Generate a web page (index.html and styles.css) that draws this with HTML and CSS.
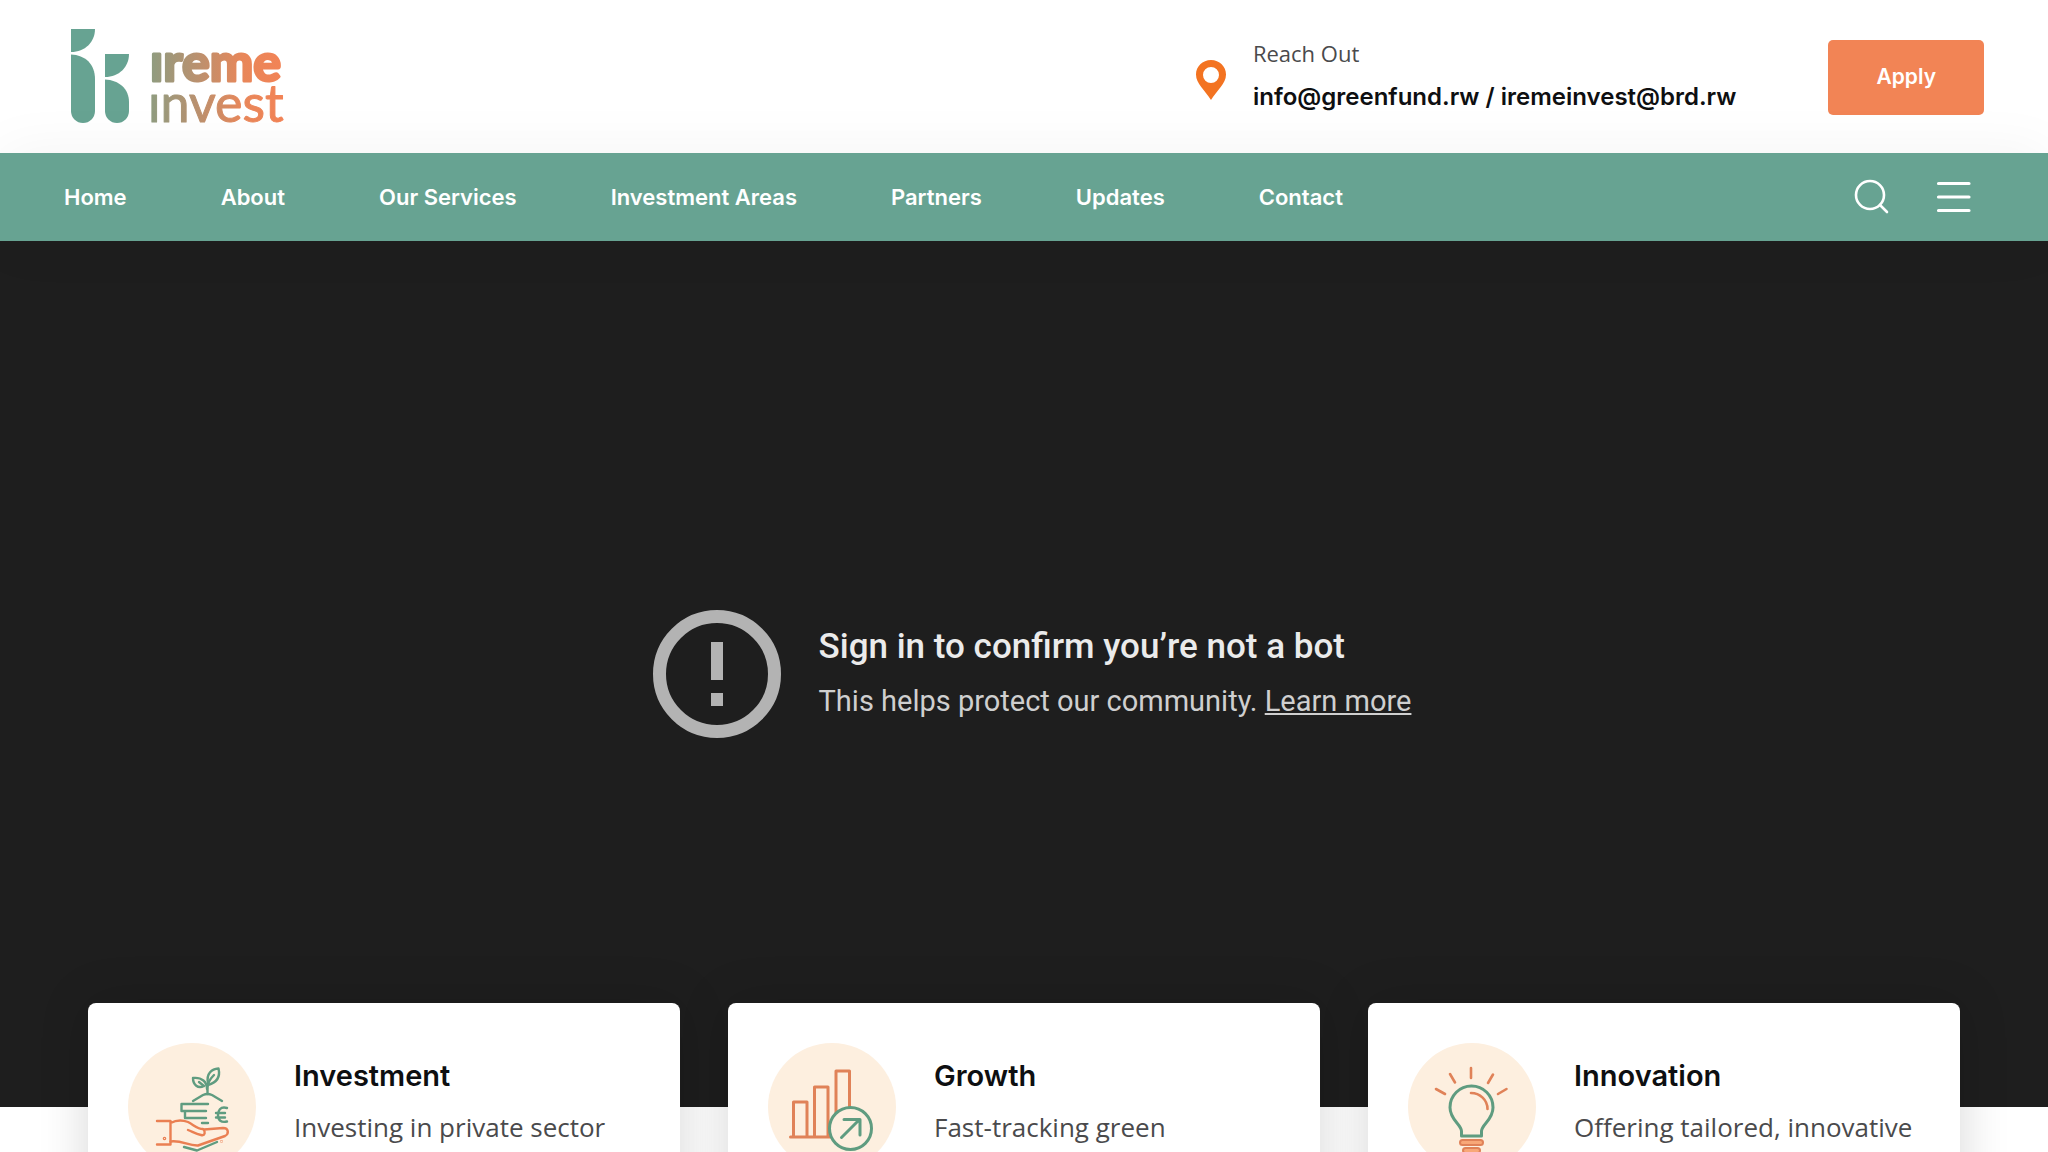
FILE: index.html
```html
<!DOCTYPE html>
<html lang="en">
<head>
<meta charset="utf-8">
<meta name="viewport" content="width=device-width, initial-scale=1">
<title>Ireme Invest</title>
<link rel="stylesheet" href="styles.css">
</head>
<body>
<header class="topbar">
  <a class="logo" href="#" aria-label="Ireme Invest home">
    <svg width="240" height="110" viewBox="60 22 240 110">
      <defs>
        <linearGradient id="brand" gradientUnits="userSpaceOnUse" x1="150" y1="0" x2="282" y2="0">
          <stop offset="0" stop-color="#8f9c80"/>
          <stop offset=".35" stop-color="#b9916f"/>
          <stop offset=".7" stop-color="#e8875a"/>
          <stop offset="1" stop-color="#f28356"/>
        </linearGradient>
      </defs>
      <g fill="#67a392">
        <path d="M71 29H95C95 42 85 52 71 52Z"/>
        <path d="M71 54.500C85 55 95 64 95 79V111A12 12 0 0 1 71 111Z"/>
        <path d="M105 54H129C129 67 119 77 105 77Z"/>
        <path d="M105 79.500C119 80 129 89 129 102V111A12 12 0 0 1 105 111Z"/>
      </g>
      <g fill="url(#brand)" stroke="url(#brand)" stroke-linejoin="round">
        <text class="logo-bold" x="150" y="81">ıreme</text>
        <text class="logo-light" x="148" y="122">ınvest</text>
      </g>
    </svg>
  </a>
  <div class="contact">
    <svg class="pin" width="30" height="40" viewBox="0 0 30 40" aria-hidden="true">
      <path fill="#f37321" fill-rule="evenodd" d="M15 0C6.500 0 0 6.500 0 14.500C0 24 9 30 15 40C21 30 30 24 30 14.500C30 6.500 23.500 0 15 0ZM15 7A8 8 0 1 1 15 23A8 8 0 0 1 15 7Z"/>
    </svg>
    <div class="contact-text">
      <span class="contact-label">Reach Out</span>
      <a class="contact-mail" href="mailto:info@greenfund.rw">info@greenfund.rw / iremeinvest@brd.rw</a>
    </div>
  </div>
  <button class="apply" type="button">Apply</button>
</header>

<nav class="mainnav">
  <ul class="links">
    <li><a href="#">Home</a></li>
    <li><a href="#">About</a></li>
    <li><a href="#">Our Services</a></li>
    <li><a href="#">Investment Areas</a></li>
    <li><a href="#">Partners</a></li>
    <li><a href="#">Updates</a></li>
    <li><a href="#">Contact</a></li>
  </ul>
  <div class="tools">
    <button class="tool" type="button" aria-label="Search">
      <svg width="36" height="36" viewBox="0 0 36 36" fill="none" stroke="#fff" stroke-width="2.600" stroke-linecap="round"><circle cx="16" cy="16" r="14"/><path d="M26 26L33 33"/></svg>
    </button>
    <button class="tool" type="button" aria-label="Menu">
      <svg width="36" height="36" viewBox="0 0 36 36" fill="none" stroke="#fff" stroke-width="3.200" stroke-linecap="round"><path d="M2.500 4.500H33M2.500 18H33M2.500 31.500H33"/></svg>
    </button>
  </div>
</nav>

<main>
  <section class="hero">
    <svg class="alert" width="128" height="128" viewBox="0 0 128 128" aria-hidden="true">
      <circle cx="64" cy="64" r="57.500" fill="none" stroke="#b3b3b3" stroke-width="13"/>
      <path fill="#b3b3b3" d="M58 32H70V70H58ZM58 83H70V96H58Z"/>
    </svg>
    <div class="hero-text">
      <h1>Sign in to confirm you’re not a bot</h1>
      <p>This helps protect our community. <a href="#">Learn more</a></p>
    </div>
  </section>

  <section class="cards">
    <article class="card">
      <svg class="badge" width="128" height="128" viewBox="0 0 128 128" fill="none" stroke-width="2.400" stroke-linecap="round" stroke-linejoin="round" aria-hidden="true">
        <circle cx="64" cy="64" r="64" fill="#fdefdf"/>
        <g stroke="#5f9c80">
          <path d="M79.500 51V41M79.500 45C79.500 40 83 35 86 32"/>
          <path d="M80 40C78 30 84 26 90.500 25.500C92 32 91 39 80 42"/>
          <path d="M79 46C79 39 74 34 65 35C65 42 70 46 76 43M71 39L76 43"/>
          <path d="M65 58L75 52Q79.500 50 84 52L94 58"/>
          <path d="M80 61H53.500V68H78M57 68V75H78M74 80H80"/>
          <path d="M99 65C92 63 90 68 90 72C90 77 93 80 99 78.500M88 70H97M88 74.500H97"/>
          <path d="M56 104L69 107.500L89 99"/>
        </g>
        <g stroke="#ea7f52">
          <path d="M29 78H42.500V101.500H29M42.500 80C50 76 55 77 60 79C66 82 69 86 75 86C78 89 77 93 73 92C68 91 65 89 60 87"/>
          <path d="M76 86.500L95 85C101 85 101 91 97 93L70 102.500C60 103 54 97 42.500 98.500"/>
          <circle cx="36.500" cy="95.500" r=".6"/><circle cx="93.500" cy="98.500" r=".2"/>
        </g>
      </svg>
      <div class="card-text"><h2>Investment</h2><p>Investing in private sector</p></div>
    </article>
    <article class="card">
      <svg class="badge" width="128" height="128" viewBox="0 0 128 128" fill="none" stroke-width="3" stroke-linecap="round" stroke-linejoin="round" aria-hidden="true">
        <circle cx="64" cy="64" r="64" fill="#fdefdf"/>
        <path stroke="#e08258" d="M22.500 94H64M25.500 93V59H39V93M46.500 93V44H60V93M68 74V28H81.500V70"/>
        <circle cx="82.500" cy="85.500" r="21" fill="#fdefdf" stroke="#5f9c80"/>
        <path stroke="#5f9c80" d="M73.500 94.500L91 77M76 76.500H92V92"/>
      </svg>
      <div class="card-text"><h2>Growth</h2><p>Fast-tracking green</p></div>
    </article>
    <article class="card">
      <svg class="badge" width="128" height="128" viewBox="0 0 128 128" fill="none" stroke-width="3" stroke-linecap="round" stroke-linejoin="round" aria-hidden="true">
        <circle cx="64" cy="64" r="64" fill="#fdefdf"/>
        <path stroke="#5f9c80" d="M53.500 93V88C53 81 42 77 42 64.500A21.500 21.500 0 0 1 85 64.500C85 77 74 81 73.500 88V93Z"/>
        <path stroke="#e08258" stroke-width="2.600" d="M63 50C72 50 79.500 57 79.500 66M63 25V35M42 31L47 39.500M85 31.500L80 40M28 46L37 51M98.500 46L90 51"/>
        <g fill="#f8a878" stroke="#e08258" stroke-width="2"><rect x="52" y="97" width="23" height="5" rx="2.500"/><rect x="55" y="105" width="17" height="5" rx="2.500"/></g>
      </svg>
      <div class="card-text"><h2>Innovation</h2><p>Offering tailored, innovative</p></div>
    </article>
  </section>
</main>
</body>
</html>
```
FILE: styles.css
```css
* { box-sizing: border-box; }

body {
  margin: 0;
  background: #fff;
  color: #4a4a4c;
  font-family: "Open Sans", sans-serif;
}

h1, h2, p, ul { margin: 0; padding: 0; }
a { color: inherit; text-decoration: none; }
button { border: 0; cursor: pointer; }

.topbar {
  display: flex;
  align-items: center;
  padding: 22px 64px 21px 60px;
}
.logo { margin-right: auto; }
.logo svg { display: block; overflow: visible; }
.logo-bold { font: 700 52px Lato, sans-serif; stroke-width: 3px; }
.logo-light { font: 400 52px Lato, sans-serif; stroke-width: 1px; }

.contact { display: flex; align-items: center; gap: 27px; margin-right: 92px; }
.pin { margin-top: 6px; }
.contact-text { display: flex; flex-direction: column; gap: 12px; padding-bottom: 2px; }
.contact-label { font-size: 22px; line-height: 30px; }
.contact-mail {
  color: #0e0f11;
  font: 600 24px/34px Inter, sans-serif;
}

.apply {
  padding: 19px 48px 21px;
  border-radius: 5px;
  background: #f28455;
  color: #fff;
  font: 600 21px/35px Inter, sans-serif;
}

.mainnav {
  position: relative;
  display: flex;
  align-items: center;
  justify-content: space-between;
  padding: 0 76px 0 64px;
  background: #67a392;
  box-shadow: 0 0 60px rgba(0, 0, 0, .05);
}
.links { display: flex; gap: 94px; list-style: none; }
.links a {
  display: block;
  color: #fff;
  font: 600 22px/36px Inter, sans-serif;
  padding: 26px 0;
}
.tools { display: flex; gap: 46px; }
.tool { padding: 0; background: none; }
.tool svg { display: block; }

.hero {
  display: flex;
  align-items: center;
  justify-content: center;
  gap: 38px;
  min-height: 866px;
  padding-left: 16px;
  background: #1e1e1e;
  font-family: Roboto, sans-serif;
}
.hero h1 { color: #ebebeb; font-size: 35px; font-weight: 500; line-height: 54px; }
.hero p { color: #cfcfcf; font-size: 29px; line-height: 54px; }
.hero p a { text-decoration: underline; }

.cards {
  position: relative;
  display: grid;
  grid-template-columns: repeat(3, 1fr);
  gap: 48px;
  margin-top: -104px;
  padding: 0 88px 80px;
}
.card {
  display: flex;
  gap: 38px;
  padding: 40px;
  border-radius: 8px;
  background: #fff;
  box-shadow: 0 0 50px rgba(0, 0, 0, .16);
}
.badge { flex: none; }
.card-text { padding-top: 12px; }
.card h2 { color: #0e0f11; font: 600 29px/42px Inter, sans-serif; }
.card p { margin-top: 8px; font-size: 26px; line-height: 44px; }
```
